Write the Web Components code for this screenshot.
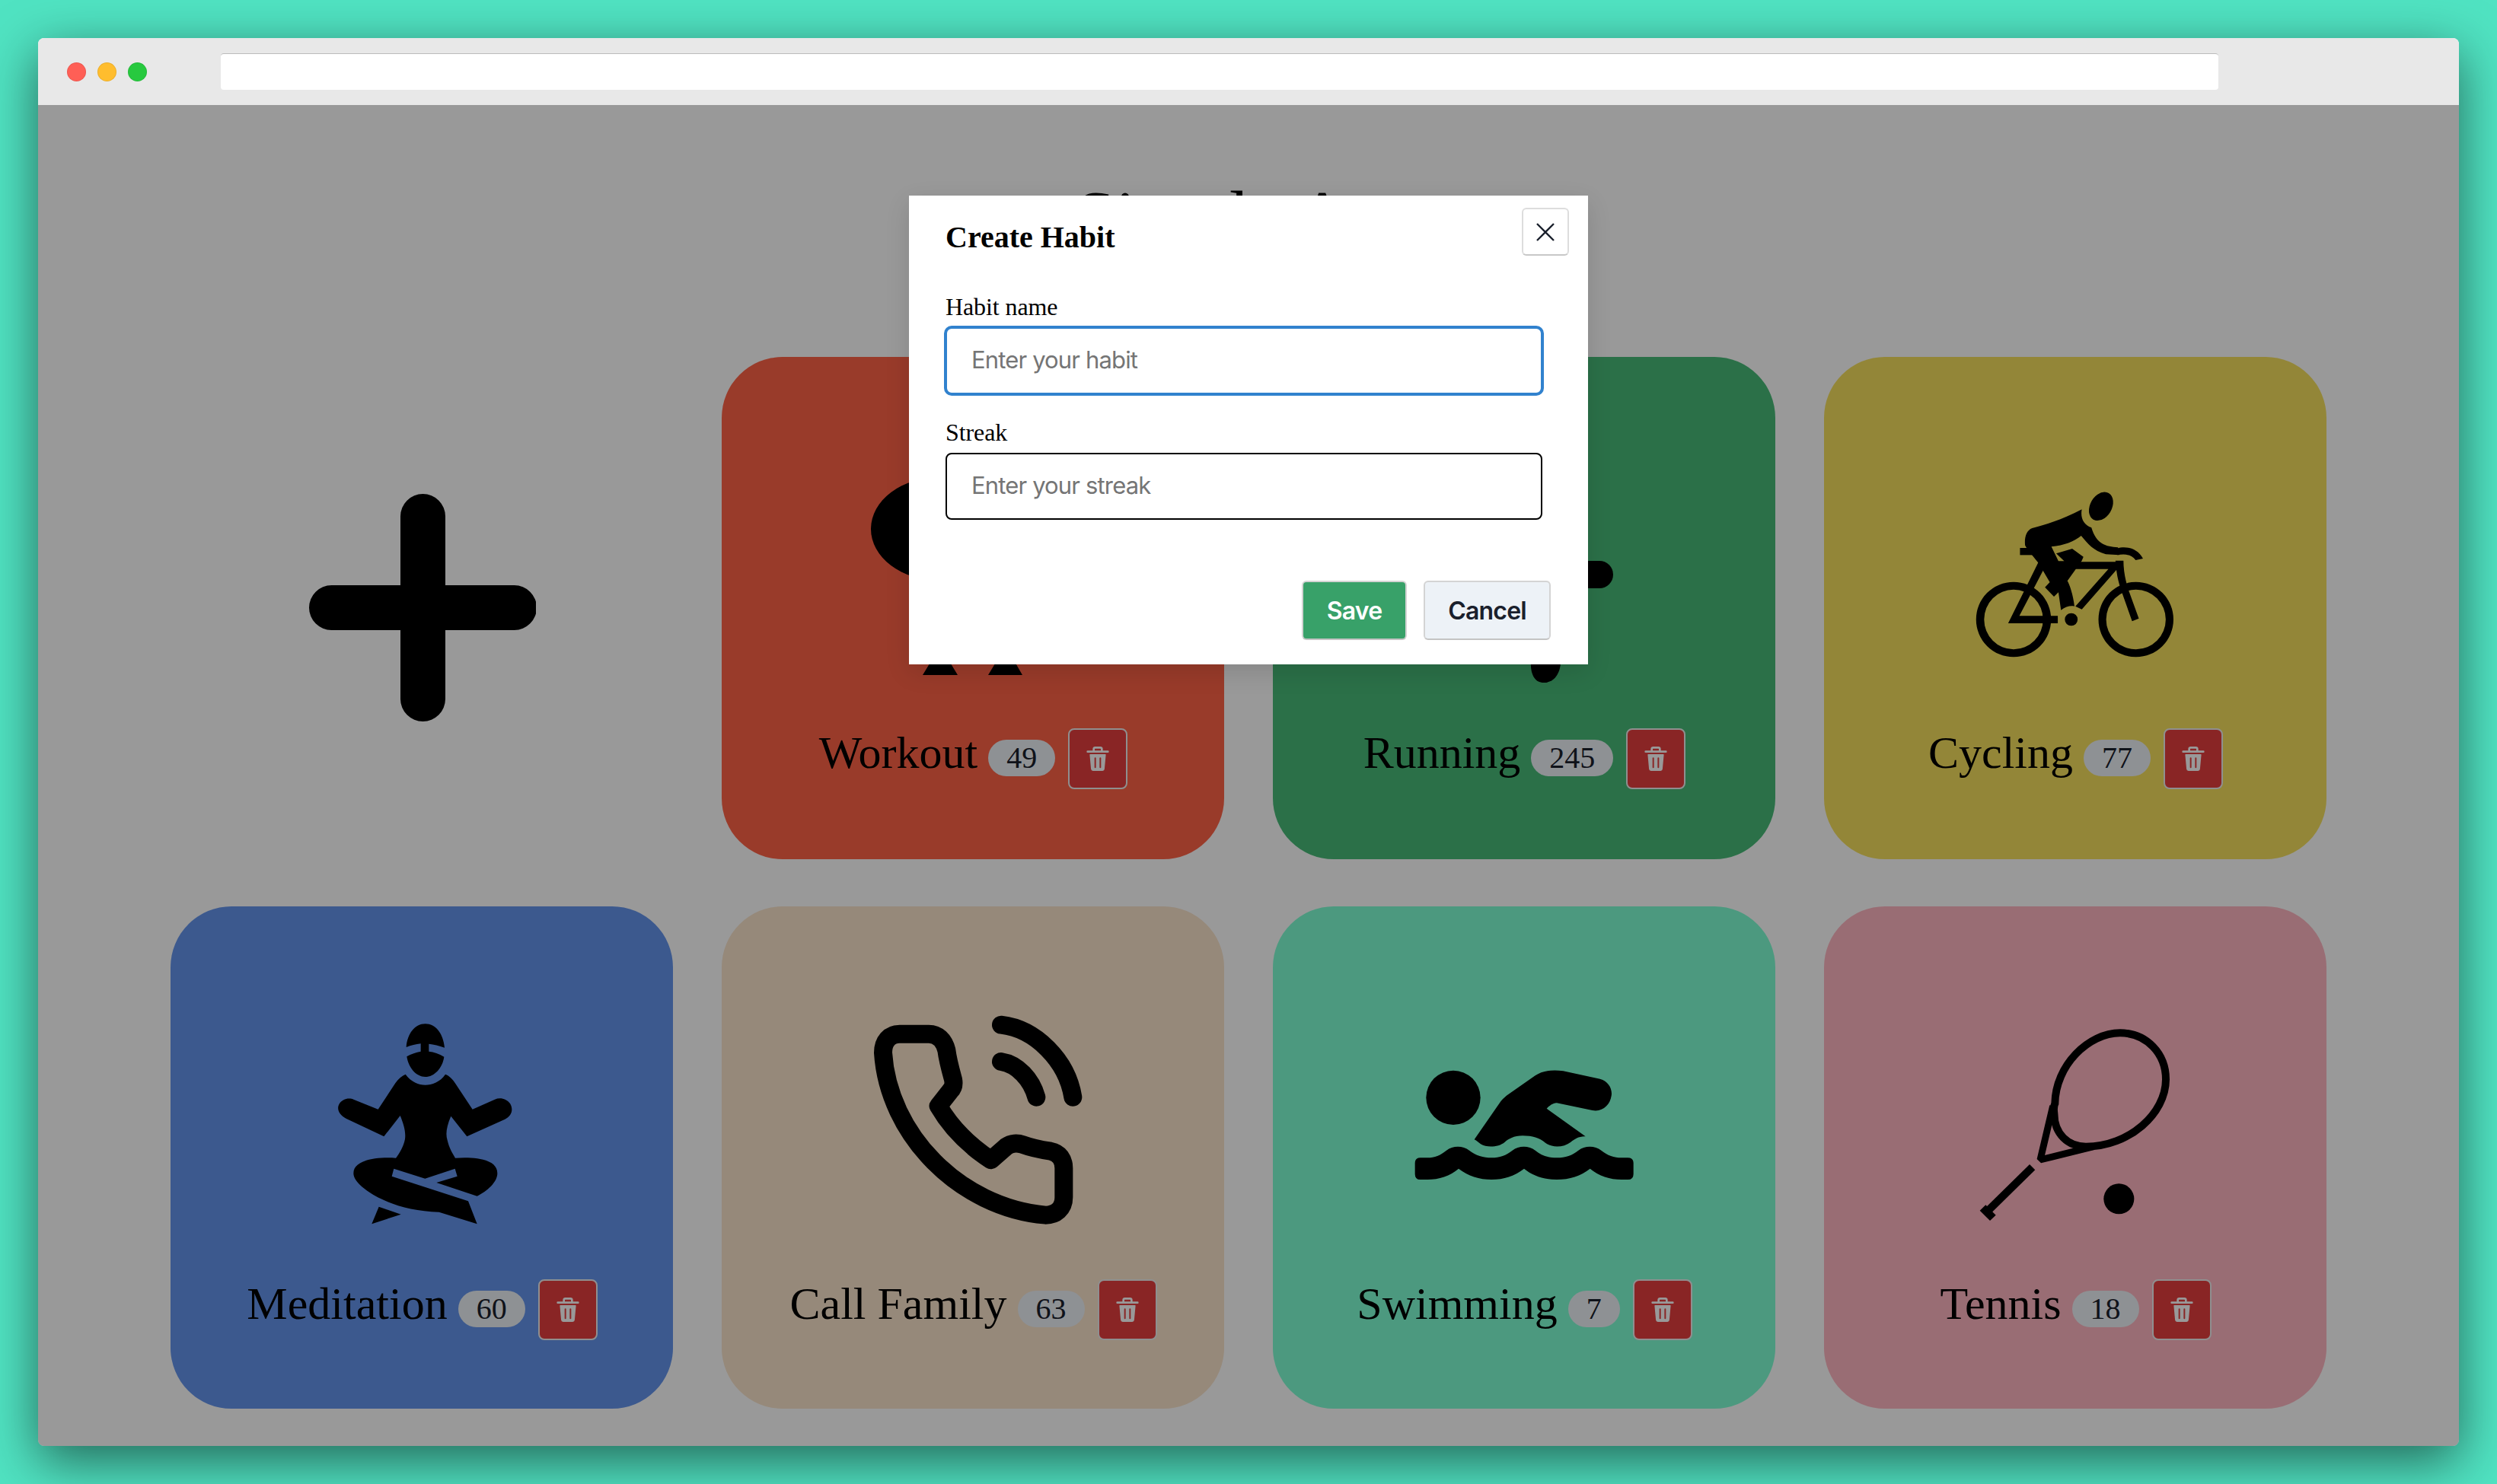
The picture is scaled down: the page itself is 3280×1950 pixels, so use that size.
<!DOCTYPE html>
<html lang="en">
<head>
<meta charset="utf-8">
<title>Streak App</title>
<style>
html,body{margin:0;padding:0;height:100%}
body{background:#50e3c2;font-family:"Liberation Serif","Times New Roman",serif}
</style>
</head>
<body>
<browser-window>
  <habit-page>
    <span slot="title">Simple App</span>
    <habit-card add>
      <svg slot="icon" width="300" height="300" viewBox="0 0 300 300"><path d="M151.5 29.5V269.5M31.5 149.5H271.5" fill="none" stroke="#000" stroke-width="59" stroke-linecap="round"/></svg>
    </habit-card>
    <habit-card name="Workout" count="49" color="#ff6347">
      <svg slot="icon" width="300" height="300" viewBox="0 0 300 300">
        <ellipse cx="106" cy="96" rx="90" ry="68"/>
        <path d="M84 288L107 250L130 288ZM170 288L193 250L215 288Z"/>
      </svg>
    </habit-card>
    <habit-card name="Running" count="245" color="#48bb78">
      <svg slot="icon" width="300" height="300" viewBox="0 0 300 300">
        <path d="M100 156H249" fill="none" stroke="#000" stroke-width="36" stroke-linecap="round"/>
        <path d="M159 270L198 270C198 285 190 298 176 298C163 298 158 285 159 270Z"/>
      </svg>
    </habit-card>
    <habit-card name="Cycling" count="77" color="#f6e05e">
      <svg slot="icon" width="300" height="300" viewBox="418 -3 713 900" preserveAspectRatio="none">
        <path fill-rule="evenodd" d="M465 642a117 148 0 1 0 234 0a117 148 0 1 0 -234 0ZM490 642a92 118 0 1 1 184 0a92 118 0 1 1 -184 0Z"/>
        <path fill-rule="evenodd" d="M847 642a117 148 0 1 0 234 0a117 148 0 1 0 -234 0ZM871 642a93 118 0 1 1 186 0a93 118 0 1 1 -186 0Z"/>
        <path d="M660 415L565 657H720V628H600L682 430Z"/>
        <path d="M770 415H925L795 602L775 590L878 443H770Z"/>
        <path d="M900 410L925 410C925 450 932 495 942 530L973 638L952 649L920 535C908 495 902 450 900 410Z"/>
        <path d="M602 360H650V388H602Z"/>
        <ellipse cx="762" cy="642" rx="20" ry="25"/>
        <path d="M905 362C930 352 968 358 986 402L963 408C950 385 930 383 905 388Z"/>
        <path d="M795 208C730 250 680 270 640 282C622 290 615 320 618 350L625 365L660 420L695 495L680 515L708 552L722 535L730 605C745 590 760 587 772 590C768 545 757 505 750 490L795 410L800 395L765 363L715 382L740 412L722 412L700 355C740 350 770 335 793 312C815 345 830 370 870 385L912 388L908 358C870 355 840 345 825 280C800 270 790 240 795 208Z"/>
        <ellipse cx="855" cy="196" rx="35" ry="58" transform="rotate(18 855 196)"/>
      </svg>
    </habit-card>
    <habit-card name="Meditation" count="60" color="#6495ed" style="--top:132px">
      <svg slot="icon" width="300" height="300" viewBox="132 99 900 900">
        <path d="M521 258C525 205 555 166 596 166C637 166 667 205 672 260C650 252 630 247 610 245V275C630 277 650 284 670 296C664 340 632 375 596 375C560 375 530 340 523 295C540 285 560 278 578 275V244C558 246 540 251 521 258Z"/>
        <path d="M518 365C540 395 570 407 596 407C622 407 655 395 675 365C690 370 705 385 715 402L782 503L870 464C890 455 915 460 930 480C945 505 935 530 910 542L760 610L697 530C680 570 675 600 683 625C690 655 702 675 714 695C780 690 880 695 880 755C880 790 840 825 800 845L640 792L722 767L713 737L595 776L472 737L464 767L765 865L800 955L650 908C560 905 480 885 420 855C370 830 313 790 313 755C313 700 410 690 480 695C495 675 510 650 516 620C520 590 510 560 497 528L433 610L285 540C255 525 245 500 258 480C270 462 295 455 315 465L410 503L478 400C490 382 505 370 518 365Z"/>
        <path d="M413 887L500 917L385 955Z"/>
      </svg>
    </habit-card>
    <habit-card name="Call Family" count="63" color="#fae4cb" style="--top:132px">
      <svg slot="icon" width="300" height="300" viewBox="144 99 900 900">
        <g fill="none" stroke="#000" stroke-width="72" stroke-linecap="round" stroke-linejoin="round">
          <path d="M240 280C240 235 265 206 305 206H420C455 206 480 230 490 270C495 310 505 345 516 385C520 405 515 420 505 430L458 490C510 580 585 650 665 703L725 650C745 635 770 635 790 642C825 655 860 662 900 668C935 675 952 700 952 735V850C952 895 920 920 880 920C540 890 260 600 240 280Z"/>
          <path d="M705 170C840 185 965 310 988 455"/>
          <path d="M705 315C770 325 825 385 844 455"/>
        </g>
      </svg>
    </habit-card>
    <habit-card name="Swimming" count="7" color="#7fffd4" style="--top:132px">
      <svg slot="icon" width="300" height="300" viewBox="156 -81 900 900">
        <circle cx="327" cy="277" r="107"/>
        <path d="M410 442L515 290C525 278 535 270 545 263L650 190C675 172 715 165 760 172L905 203C940 212 955 245 950 270C945 305 915 335 875 327L735 298C720 297 705 310 695 320L848 430C825 428 805 440 790 452C760 475 715 475 690 455C665 435 640 427 600 427C565 427 545 440 530 452C505 473 460 475 435 460C425 452 420 447 410 442Z"/>
        <path d="M197 514H225C255 514 275 505 300 485C325 465 365 465 390 485C415 505 445 514 478 514C510 514 535 505 560 485C585 465 625 465 650 485C675 505 700 514 735 514C770 514 795 505 820 485C845 465 885 465 910 485C935 505 960 514 990 514H1015Q1037 514 1037 535V578Q1037 600 1015 600H990C945 600 900 585 866 557C830 585 785 600 735 600C685 600 640 585 606 557C570 585 525 600 478 600C430 600 385 585 348 557C315 585 270 600 225 600H197Q176 600 176 578V535Q176 514 197 514Z"/>
      </svg>
    </habit-card>
    <habit-card name="Tennis" count="18" color="#ffb6c1" style="--top:132px">
      <svg slot="icon" width="300" height="300" viewBox="108 9 900 900">
        <path d="M478 390C480 240 610 112 735 112C840 112 915 195 915 295C915 430 770 560 600 560C530 560 475 510 475 430C473 415 473 400 478 390Z" fill="none" stroke="#000" stroke-width="30"/>
        <path d="M470 400L420 612L630 560" fill="none" stroke="#000" stroke-width="27" stroke-linejoin="bevel"/>
        <path d="M389 641L215 812" fill="none" stroke="#000" stroke-width="31"/>
        <path d="M182 812L205 790L245 830L222 852Z"/>
        <circle cx="730" cy="766" r="60"/>
      </svg>
    </habit-card>
  </habit-page>
  <habit-dialog slot="overlay"></habit-dialog>
</browser-window>

<template id="t-window">
<style>
:host{display:block;box-sizing:border-box;padding:50px;height:1950px}
.win{position:relative;height:1850px;display:flex;flex-direction:column;border-radius:8px;box-shadow:0 20px 68px rgba(0,0,0,.55);background:#fff;overflow:clip}
.bar{flex:none;height:88px;box-sizing:border-box;background:#e8e8e8;display:flex;align-items:center;padding-left:38px}
.dot{width:25px;height:25px;border-radius:50%;box-sizing:border-box;margin-right:15px;border:1px solid rgba(0,0,0,.08)}
.url{margin-left:82px;width:2624px;height:48px;box-sizing:border-box;background:#fff;border-top:1px solid #bbb;border-radius:4px}
.main{flex:1;position:relative;min-height:0}
</style>
<div class="win">
  <div class="bar">
    <span class="dot" style="background:#ff5f56"></span><span class="dot" style="background:#ffbd2e"></span><span class="dot" style="background:#27c93f"></span>
    <div class="url"></div>
  </div>
  <div class="main"><slot></slot><slot name="overlay"></slot></div>
</div>
</template>

<template id="t-page">
<style>
:host{display:block;color:#000}
h1{margin:0;padding-top:92px;height:110px;font:400 96px/110px "Liberation Serif","Times New Roman",serif;text-align:center}
.grid{display:grid;grid-template-columns:repeat(4,660px);column-gap:64px;row-gap:62px;justify-content:center;margin-top:129px}
</style>
<h1><slot name="title"></slot></h1>
<div class="grid"><slot></slot></div>
</template>

<template id="t-card">
<style>
:host{display:flex;flex-direction:column;align-items:center;width:660px;height:660px;border-radius:80px;box-sizing:border-box;padding-top:var(--top,130px)}
:host([add]){padding-top:180px}
.icon{width:300px;height:300px;flex:none}
.row{display:flex;align-items:flex-start;margin:58px 0 0 1px;gap:17px}
.txt{display:flex;align-items:baseline;gap:14px;margin-top:-2px}
.name{font:400 60px/69px "Liberation Serif","Times New Roman",serif;white-space:nowrap}
.badge{font:400 40px/46px "Liberation Serif","Times New Roman",serif;color:#1a202c;background:#edf2f7;border-radius:24px;padding:1px 24px}
.del{width:78px;height:80px;box-sizing:border-box;background:#e53e3e;border:2px solid #eee;border-radius:8px;display:flex;align-items:center;justify-content:center}
</style>
<div class="icon"><slot name="icon"></slot></div>
<div class="row" part="row">
  <div class="txt"><span class="name"></span><span class="badge"></span></div>
  <div class="del"><svg width="32" height="32" viewBox="0 0 24 24" fill="#fff"><path d="M19.452 7.5H4.547a.5.5 0 00-.5.545l1.287 14.136A2 2 0 007.326 24h9.347a2 2 0 001.992-1.819L19.95 8.045a.5.5 0 00-.129-.382.5.5 0 00-.369-.163zm-9.2 13a.75.75 0 01-1.5 0v-9a.75.75 0 011.5 0zm5 0a.75.75 0 01-1.5 0v-9a.75.75 0 011.5 0zM22 4h-4.75a.25.25 0 01-.25-.25V2.5A2.5 2.5 0 0014.5 0h-5A2.5 2.5 0 007 2.5v1.25a.25.25 0 01-.25.25H2a1 1 0 000 2h20a1 1 0 000-2zM9 3.75V2.5a.5.5 0 01.5-.5h5a.5.5 0 01.5.5v1.25a.25.25 0 01-.25.25h-5.5A.25.25 0 019 3.75z"/></svg></div>
</div>
</template>

<template id="t-dialog">
<style>
:host{display:block;position:absolute;inset:0;background:rgba(0,0,0,.4);z-index:5}
.modal{position:absolute;left:1144px;top:119px;width:892px;height:616px;box-sizing:border-box;background:#fff;box-shadow:0 10px 30px rgba(0,0,0,.12);padding:32px 49px 32px 48px;display:flex;flex-direction:column;font-family:"Liberation Serif","Times New Roman",serif;color:#000}
h2{margin:0;font:700 40px/46px "Liberation Serif","Times New Roman",serif}
.close{position:absolute;top:16px;right:25px;width:62px;height:63px;box-sizing:border-box;border:2px solid #ddd;border-bottom-color:#c8c8c8;border-radius:6px;display:flex;align-items:center;justify-content:center;background:#fff}
.form{display:flex;flex-direction:column;margin-top:50px;padding-right:11px}
.foot{display:flex;justify-content:flex-end;gap:22px;margin-top:80px}
.btn{height:78px;box-sizing:border-box;border-radius:6px;border:2px solid #d4d4d4;border-bottom-color:#c4c4c4;display:flex;align-items:center;justify-content:center;font:600 32px "Inter","Liberation Sans",sans-serif;letter-spacing:-.8px}
.save{width:138px;background:#38a169;color:#fff}
.cancel{width:167px;background:#edf2f7;color:#1a202c}
</style>
<div class="modal">
  <h2>Create Habit</h2>
  <div class="close"><svg width="28" height="28" viewBox="0 0 28 28"><path d="M3 3L25 25M25 3L3 25" stroke="#1a202c" stroke-width="2.4" fill="none"/></svg></div>
  <div class="form">
    <form-field label="Habit name" placeholder="Enter your habit" focused></form-field>
    <form-field label="Streak" placeholder="Enter your streak" style="margin-top:32px"></form-field>
  </div>
  <div class="foot"><div class="btn save">Save</div><div class="btn cancel">Cancel</div></div>
</div>
</template>

<template id="t-field">
<style>
:host{display:block}
.lab{font:400 32px/37px "Liberation Serif","Times New Roman",serif;margin-bottom:8px;letter-spacing:-.1px}
.box{height:88px;box-sizing:border-box;border:2.5px solid #000;border-radius:8px;display:flex;align-items:center;padding:0 0 3px 32px;font:400 31px "Inter","Liberation Sans",sans-serif;letter-spacing:-.85px;color:#757575;background:#fff}
:host([focused]) .box{border-color:#3182ce;box-shadow:0 0 0 2px #3182ce}
</style>
<div class="lab"></div>
<div class="box" role="textbox"></div>
</template>

<script>
function mount(el,id){const r=el.attachShadow({mode:'open'});r.appendChild(document.getElementById(id).content.cloneNode(true));return r;}
customElements.define('browser-window',class extends HTMLElement{constructor(){super();mount(this,'t-window');}});
customElements.define('habit-page',class extends HTMLElement{constructor(){super();mount(this,'t-page');}});
customElements.define('habit-dialog',class extends HTMLElement{constructor(){super();mount(this,'t-dialog');}});
customElements.define('form-field',class extends HTMLElement{constructor(){super();this.r=mount(this,'t-field');}
 connectedCallback(){this.r.querySelector('.lab').textContent=this.getAttribute('label');this.r.querySelector('.box').textContent=this.getAttribute('placeholder');}});
customElements.define('habit-card',class extends HTMLElement{constructor(){super();this.r=mount(this,'t-card');}
 connectedCallback(){
  if(this.hasAttribute('add')){this.r.querySelector('.row').remove();return;}
  this.style.background=this.getAttribute('color');
  this.r.querySelector('.name').textContent=this.getAttribute('name');
  this.r.querySelector('.badge').textContent=this.getAttribute('count');
 }});
</script>
</body>
</html>
